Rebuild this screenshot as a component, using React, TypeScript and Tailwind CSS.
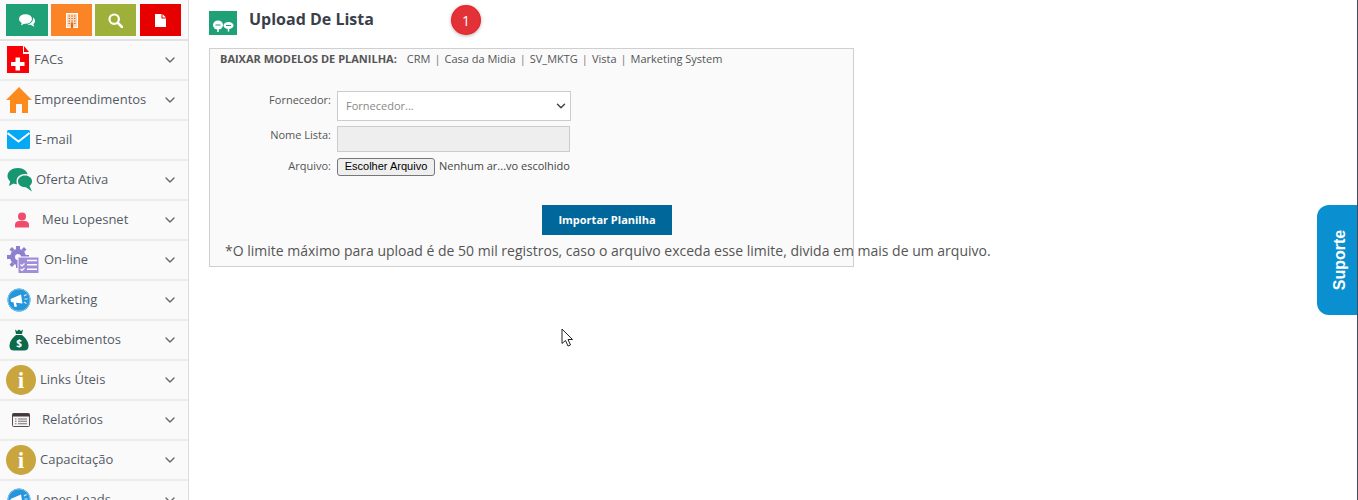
import React from 'react';
import { ChevronDown } from 'lucide-react';

const font = "font-['Open_Sans',sans-serif]";

const FacIcon = () => (
  <svg width="24" height="30" viewBox="0 0 24 30">
    <path d="M1 1H17V9H23V28H1Z" fill="#fb0007" />
    <path d="M18 1L23 7H18Z" fill="#fb0007" />
    <path d="M9.500 12.500H14V17H18.500V21H14V25.500H9.500V21H5V17H9.500Z" fill="#fff" />
  </svg>
);

const HomeIcon = () => (
  <svg width="26" height="28" viewBox="0 0 26 28">
    <path d="M13 1L26 14H22V27H16V18H10V27H4V14H0Z" fill="#fd8a1c" />
  </svg>
);

const MailIcon = () => (
  <svg width="24" height="20" viewBox="0 0 24 20">
    <rect x="0" y="0" width="23" height="19" rx="1.500" fill="#03a9f4" />
    <path d="M0.500 3L11.500 11.500L22.500 3" fill="none" stroke="#fff" strokeWidth="2" />
  </svg>
);

const ChatIcon = () => (
  <svg width="26" height="26" viewBox="0 0 26 26">
    <path d="M11 1C16.500 1 20 4 20.500 7.500C15 6 9.500 9 9.500 14.500C9.500 15.500 9.700 16.500 10 17.200C8.500 17.200 7.500 17 6.500 16.600L2 19L3.200 14.500C1.500 12.800 0.500 11 0.500 9C0.500 4.500 5 1 11 1Z" fill="#17966f" />
    <path d="M18 8.500C22 8.500 25 11 25 14.300C25 16.300 24 18 22.500 19L25 24.500L19 20.200C14.500 20.500 11 18 11 14.300C11 11 14 8.500 18 8.500Z" fill="#17966f" />
  </svg>
);

const UserIcon = () => (
  <svg width="16" height="16" viewBox="0 0 16 16">
    <circle cx="8" cy="4.500" r="4" fill="#f04d6c" />
    <path d="M1 15.500V12.500C1 10.500 3 9 5 9H11C13 9 15 10.500 15 12.500V15.500Z" fill="#f04d6c" />
  </svg>
);

const GearIcon = () => (
  <svg width="33" height="28" viewBox="0 0 33 28">
    <circle cx="11" cy="11" r="5.500" fill="none" stroke="#8f7fcf" strokeWidth="5" />
    <path d="M9 0H13V4H9ZM9 18H13V22H9ZM0 9H4V13H0ZM18 9H22V13H18ZM2.500 3.500L5 1L7.500 3.500L5 6ZM14.500 3.500L17 1L19.500 3.500L17 6ZM2.500 18.500L5 16L7.500 18.500L5 21Z" fill="#8f7fcf" />
    <rect x="11" y="11" width="21" height="16.500" fill="#9e8fd8" stroke="#fafafa" strokeWidth="1" />
    <path d="M20 14.500H30M20 18.800H30M20 23.300H30" stroke="#fff" strokeWidth="1.500" />
    <path d="M13.500 18.500L15 20L17.500 17.500M13.500 23L15 24.500L17.500 22" fill="none" stroke="#fff" strokeWidth="1.200" />
  </svg>
);

const MegaphoneIcon = () => (
  <svg width="24" height="24" viewBox="0 0 24 24">
    <circle cx="12" cy="12" r="11.500" fill="#2496dc" />
    <circle cx="12" cy="12" r="11" fill="none" stroke="#7cc0ea" strokeWidth="1" />
    <path d="M3.500 11L14 6.500L15.500 15.500L9 14.700L10 18.500L7.500 19L6.500 14.300L4 14Z" fill="#fff" />
    <path d="M17 8L19.500 6.500M17.500 11H20.500M17 14L19.500 15.500" stroke="#dbeefb" strokeWidth="1.200" />
  </svg>
);

const MoneyIcon = () => (
  <svg width="20" height="22" viewBox="0 0 20 22">
    <path d="M6 0.500L8 2L10 0.500L12 2L14 0.500L13 5H7Z" fill="#0b6a4b" />
    <path d="M7 6H13C17 9 19.500 13 19.500 17C19.500 20 18 21.500 15 21.500H5C2 21.500 0.500 20 0.500 17C0.500 13 3 9 7 6Z" fill="#0b6a4b" />
    <text x="10" y="18" textAnchor="middle" fontSize="10" fontWeight="700" fill="#fff" fontFamily="Open Sans">$</text>
  </svg>
);

const InfoIcon = () => (
  <div className="flex h-[30px] w-[30px] items-center justify-center rounded-full bg-[#c8a63d] font-['Liberation_Serif',serif] text-[23px] font-bold leading-none text-white">
    i
  </div>
);

const ReportIcon = () => (
  <svg width="18" height="14" viewBox="0 0 18 14">
    <rect x="0.500" y="0.500" width="17" height="13" rx="1" fill="#f4f4f4" stroke="#5d4a4a" />
    <rect x="0.500" y="0.500" width="17" height="3" fill="#43383a" />
    <path d="M3 6H4.500M6 6H15M3 8.300H4.500M6 8.300H15M3 10.700H4.500M6 10.700H15" stroke="#7a6f72" strokeWidth="1.100" />
  </svg>
);

// label offset differs per row in the original menu, so each item carries its own
const menu = [
  { label: 'FACs', icon: <FacIcon />, iconBox: 'w-[34px] pl-[6px]', chevron: true },
  { label: 'Empreendimentos', icon: <HomeIcon />, iconBox: 'w-[34px] pl-[6px]', chevron: true },
  { label: 'E-mail', icon: <MailIcon />, iconBox: 'w-[35px] pl-[7px]', chevron: false },
  { label: 'Oferta Ativa', icon: <ChatIcon />, iconBox: 'w-[36px] pl-[7px]', chevron: true },
  { label: 'Meu Lopesnet', icon: <UserIcon />, iconBox: 'w-[42px] pl-[14px]', chevron: true },
  { label: 'On-line', icon: <GearIcon />, iconBox: 'w-[44px] pl-[7px]', chevron: true },
  { label: 'Marketing', icon: <MegaphoneIcon />, iconBox: 'w-[36px] pl-[7px]', chevron: true },
  { label: 'Recebimentos', icon: <MoneyIcon />, iconBox: 'w-[35px] pl-[9px]', chevron: true },
  { label: 'Links Úteis', icon: <InfoIcon />, iconBox: 'w-[40px] pl-[6px]', chevron: true },
  { label: 'Relatórios', icon: <ReportIcon />, iconBox: 'w-[42px] pl-[12px]', chevron: true },
  { label: 'Capacitação', icon: <InfoIcon />, iconBox: 'w-[40px] pl-[6px]', chevron: true },
  { label: 'Lopes Leads', icon: <MegaphoneIcon />, iconBox: 'w-[36px] pl-[7px]', chevron: true },
];

const labels = 'w-[127px] shrink-0 pr-[6px] text-right text-[11px] text-[#555]';

export default function App() {
  return (
    <div className={`relative flex h-[500px] w-[1358px] overflow-hidden bg-white ${font}`}>
      {/* Sidebar */}
      <aside className="h-[500px] w-[189px] shrink-0 overflow-hidden border-r border-[#dcdcdc] bg-[#fafafa]">
        <div className="flex h-[41px] gap-[3px] border-b-2 border-[#e2e2e2] pl-[6px] pt-[4px]">
          <div className="flex h-[32px] w-[42px] items-center justify-center bg-[#1fa077]">
            <svg width="16" height="13" viewBox="0 0 16 13">
              <ellipse cx="6.500" cy="5" rx="6.500" ry="4.800" fill="#fff" />
              <path d="M3 8L2 11.500L6.500 9Z" fill="#fff" />
              <path d="M14 3.500C15.300 4.500 16 5.600 16 7C16 8.300 15.300 9.300 14.300 10L15.300 12.800L11.500 10.800C10.500 10.900 9.500 10.700 8.500 10.300C11.500 10 14.500 7.500 14 3.500Z" fill="#fff" />
            </svg>
          </div>
          <div className="flex h-[32px] w-[41px] items-center justify-center bg-[#fb8427]">
            <svg width="12" height="15" viewBox="0 0 12 15">
              <rect x="0.500" y="0.500" width="11" height="14" fill="#fbd9bc" stroke="#fff" />
              <path d="M2.500 3H4M5.300 3H6.800M8 3H9.500M2.500 5.500H4M5.300 5.500H6.800M8 5.500H9.500M2.500 8H4M5.300 8H6.800M8 8H9.500M2.500 10.500H4M8 10.500H9.500M5.500 10V14.500H6.500V10Z" stroke="#d9691c" strokeWidth="1.200" />
            </svg>
          </div>
          <div className="flex h-[32px] w-[41px] items-center justify-center bg-[#9fb03a]">
            <svg width="15" height="15" viewBox="0 0 15 15">
              <circle cx="6.200" cy="6.200" r="4.700" fill="none" stroke="#fff" strokeWidth="2.200" />
              <path d="M9.800 9.800L14 14" stroke="#fff" strokeWidth="2.500" strokeLinecap="round" />
            </svg>
          </div>
          <div className="ml-[1px] flex h-[32px] w-[41px] items-center justify-center bg-[#e60000]">
            <svg width="11" height="13" viewBox="0 0 11 13">
              <path d="M0 0H6.500V4.500H11V13H0ZM7.500 0L11 3.500H7.500Z" fill="#fff" />
            </svg>
          </div>
        </div>
        {menu.map((item) => (
          <div key={item.label} className="flex h-[40px] items-center border-b-2 border-[#ececec] text-[13px] text-[#555a66]">
            <div className={`flex shrink-0 items-center ${item.iconBox}`}>{item.icon}</div>
            <span className="grow whitespace-nowrap">{item.label}</span>
            {item.chevron && <ChevronDown size={16} className="mr-[10px] text-[#666]" />}
          </div>
        ))}
      </aside>

      {/* Content */}
      <main className="grow pl-[20px]">
        <div className="flex h-[48px] items-start">
          <div className="mt-[11px] flex h-[24px] w-[28px] items-end justify-center bg-[#1fa077] pb-[3px]">
            <svg width="22" height="12" viewBox="0 0 22 12">
              <ellipse cx="6" cy="5" rx="5" ry="4.500" fill="#fff" />
              <ellipse cx="16.500" cy="5.500" rx="5" ry="3.500" fill="#fff" />
              <path d="M6 9V12M16.500 9V11.500" stroke="#fff" strokeWidth="1.500" />
              <path d="M3.500 5H8.500M14 5.500H19" stroke="#1fa077" strokeWidth="1.200" />
            </svg>
          </div>
          <h1 className="ml-[12px] mt-[8px] text-[16px] font-bold leading-[22px] text-[#3a3f4a]">Upload De Lista</h1>
        </div>

        <section className="h-[219px] w-[645px] border border-[#cfcfcf] bg-[#fafafa]">
          <div className="flex h-[20px] items-center pl-[10px] text-[11px] text-[#555]">
            <b className="mr-[10px] font-bold">BAIXAR MODELOS DE PLANILHA:</b>
            <span>CRM</span>
            <span className="mx-[4px] text-[#777]">|</span>
            <span>Casa da Midia</span>
            <span className="mx-[4px] text-[#777]">|</span>
            <span>SV_MKTG</span>
            <span className="mx-[4px] text-[#777]">|</span>
            <span>Vista</span>
            <span className="mx-[4px] text-[#777]">|</span>
            <span>Marketing System</span>
          </div>

          <div className="mt-[22px] flex h-[30px] items-start">
            <label className={`${labels} pt-[1px]`}>Fornecedor:</label>
            <div className="flex h-[30px] w-[234px] items-center justify-between border border-[#ccc] bg-white pl-[8px] pr-[2px] text-[11px] text-[#888]">
              Fornecedor...
              <ChevronDown size={14} strokeWidth={2.500} className="text-[#444]" />
            </div>
          </div>
          <div className="mt-[5px] flex h-[26px] items-start">
            <label className={`${labels} pt-[1px]`}>Nome Lista:</label>
            <div className="h-[26px] w-[233px] border border-[#ccc] bg-[#eee]" />
          </div>
          <div className="mt-[5px] flex h-[19px] items-center">
            <label className={labels}>Arquivo:</label>
            <div className="flex w-[240px] items-center whitespace-nowrap text-[11px] text-[#444]">
              <span className="flex h-[18px] w-[98px] items-center justify-center rounded-[3px] border border-[#767676] bg-[#efefef] font-['Liberation_Sans',sans-serif] text-[11px] text-black">
                Escolher Arquivo
              </span>
              <span className="ml-[4px]">Nenhum ar...vo escolhido</span>
            </div>
          </div>

          <div className="mt-[29px] flex pl-[332px]">
            <button className="h-[30px] w-[130px] bg-[#00679a] text-[11px] font-bold text-white">Importar Planilha</button>
          </div>
          <p className="mt-[6px] whitespace-nowrap pl-[15px] text-[14px] leading-[20px] text-[#555]">
            *O limite máximo para upload é de 50 mil registros, caso o arquivo exceda esse limite, divida em mais de um arquivo.
          </p>
        </section>
      </main>

      {/* Floating bits */}
      <div className="absolute left-[452px] top-[6px] flex h-[28px] w-[28px] items-center justify-center rounded-full bg-[#e23237] text-[14px] text-white shadow-[0_1px_4px_rgba(0,0,0,0.45)] ring-1 ring-[#f01c20]">
        1
      </div>
      <div className="absolute left-[1317px] top-[205px] flex h-[110px] w-[40px] items-center justify-center rounded-l-[12px] bg-[#0a90d0] pl-[6px]">
        <span className="-rotate-90 whitespace-nowrap font-['Liberation_Sans',sans-serif] text-[16px] font-bold text-white">Suporte</span>
      </div>
      <div className="absolute right-0 top-0 h-[500px] w-[1px] bg-[#444c5c]" />
      <svg className="absolute left-[561px] top-[328px]" width="13" height="20" viewBox="0 0 13 20">
        <path d="M1 1V15.500L4.500 12.500L7 18L9.500 17L7 11.500H11.500Z" fill="#fff" stroke="#222" strokeWidth="1" />
      </svg>
    </div>
  );
}
